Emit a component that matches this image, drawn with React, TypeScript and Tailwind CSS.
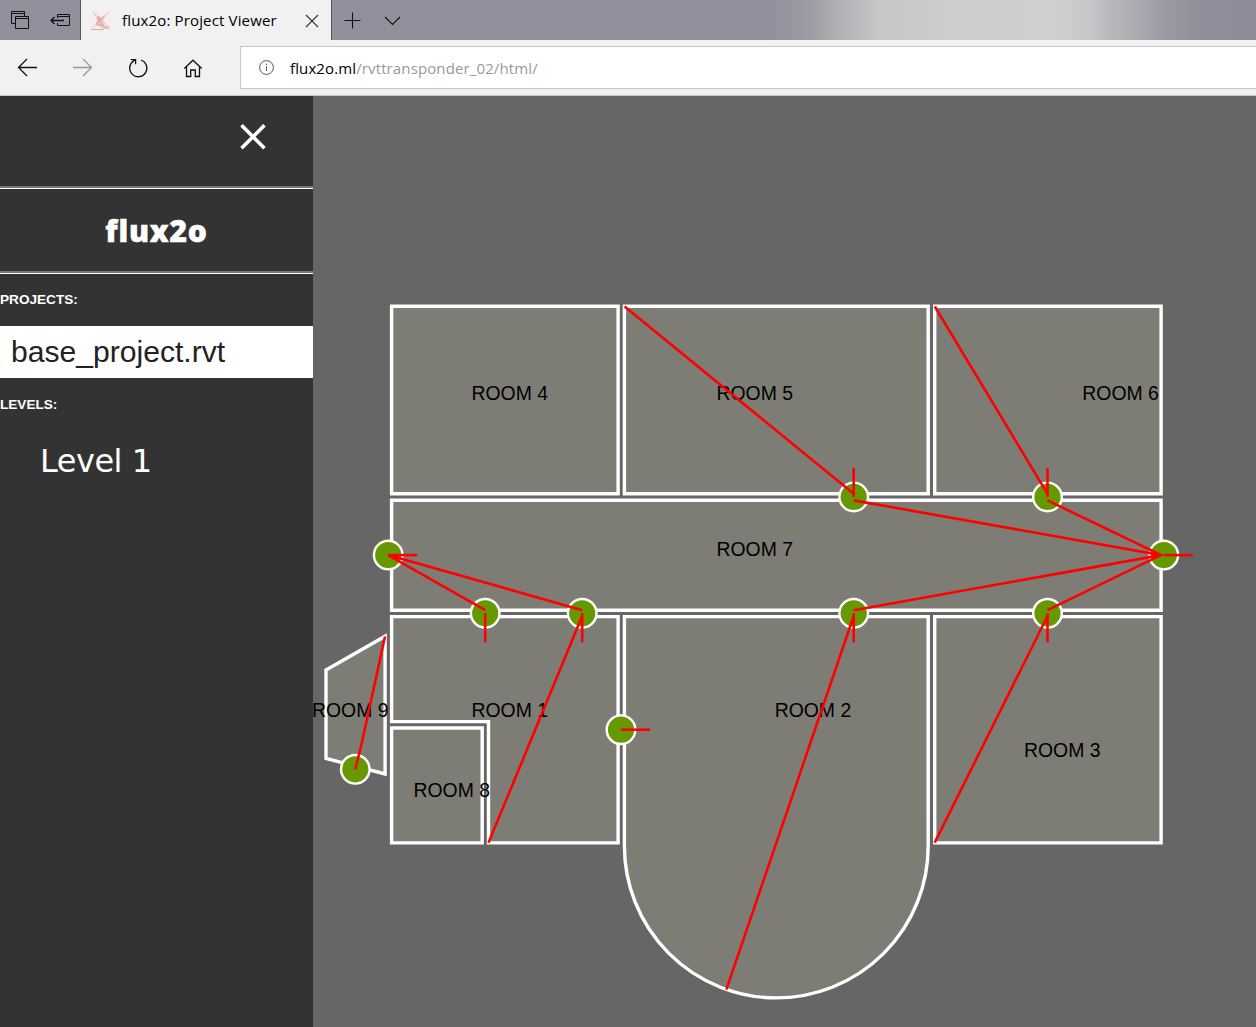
import React from 'react';

const rooms = [
  'M391.6 306.3H618.1V493.8H391.6Z',
  'M624.4 306.3H928.2V493.8H624.4Z',
  'M934.7 306.3H1161.1V493.8H934.7Z',
  'M391.6 500.3H1161.1V610.3H391.6Z',
  'M391.6 616.6H618.1V842.9H488.5V721.6H391.6Z',
  'M624.4 616.6H928.2V846A151.9 151.9 0 0 1 624.4 846Z',
  'M934.7 616.6H1161.1V842.9H934.7Z',
  'M391.6 728H482.2V842.9H391.6Z',
  'M326 670L385.1 636.2V774L326 758.4Z',
];

const labels: [string, number, number][] = [
  ['ROOM 4', 471.5, 400],
  ['ROOM 5', 716.5, 400],
  ['ROOM 6', 1082.3, 400],
  ['ROOM 7', 716.5, 556],
  ['ROOM 9', 312, 717],
  ['ROOM 1', 471.5, 717],
  ['ROOM 2', 774.7, 717],
  ['ROOM 3', 1024, 757],
  ['ROOM 8', 413.5, 797],
];

const doors: [number, number][] = [
  [388.2, 555.1], [485.2, 613.3], [582.2, 613.3], [853.7, 496.9], [1047.5, 496.9],
  [1163.8, 555.1], [853.7, 613.3], [1047.5, 613.3], [621, 729.7], [355.3, 769.3],
];

const paths = [
  'M388.2 555.1H417.3', 'M485.2 613.3V642.3', 'M582.2 613.3V642.3', 'M853.7 496.9V467.9',
  'M1047.5 496.9V467.9', 'M1163.8 555.1H1193', 'M853.7 613.3V642.3', 'M1047.5 613.3V642.3',
  'M621 729.7H650',
  'M388.2 555.1L485.2 610.2', 'M388.2 555.1L582.2 610.2',
  'M624.6 306.5L853.7 493.8', 'M934.8 306.5L1047.5 493.8',
  'M853.7 500.4L1161 555.1L853.7 610.2', 'M1047.5 500.4L1161 555.1L1047.5 610.2',
  'M582.2 616L488.5 842.7', 'M853.7 616L726.3 989.6', 'M1047.5 616L934.7 842.7',
  'M385 636.5L362 742L355.3 769.3',
];

function FloorPlan() {
  return (
    <svg width="943" height="931" viewBox="313 96 943 931" className="block overflow-visible">
      <g fill="#7e7d75" stroke="#fff" strokeWidth="3.4">
        {rooms.map((d) => <path key={d} d={d} />)}
      </g>
      <g fontSize="19.4" fill="#000" className="font-['Liberation_Sans',Arial,sans-serif]">
        {labels.map(([t, x, y]) => <text key={t} x={x} y={y}>{t}</text>)}
      </g>
      <g fill="#669900" stroke="#fff" strokeWidth="2.4">
        {doors.map(([x, y]) => <circle key={`${x}-${y}`} cx={x} cy={y} r="14.3" />)}
      </g>
      <g fill="none" stroke="#f00" strokeWidth="2.6">
        {paths.map((d) => <path key={d} d={d} />)}
      </g>
    </svg>
  );
}

function TitleBar() {
  return (
    <div className="flex h-10 bg-[linear-gradient(90deg,#91909d_0px,#91909d_770px,#9c9ca6_810px,#a9abad_828px,#b8b7bd_850px,#c5c6c6_878px,#cdcdcb_950px,#cfcfcf_1060px,#c6c6c8_1090px,#b9b7bd_1112px,#acadb1_1135px,#9d9da7_1160px,#8f8e9a_1200px,#8d8b97_1256px)]">
      <div className="w-20 shrink-0">
        <svg width="80" height="40" fill="none" stroke="#111" strokeWidth="1">
          <path d="M15 23.5H11.5V11.5H24.5V16M11.5 13.5H24.5M15.5 16.5H28.5V28.5H15.5ZM15.5 18.5H28.5" />
          <path d="M57.5 18V14.5H69.5V25.5H57.5V23M57.5 16.5H69.5" />
          <path d="M64 20.5H51M54.5 17L51 20.5L54.5 24" strokeWidth="1.3" />
        </svg>
      </div>
      <div className="flex w-[252px] shrink-0 items-center border-x border-[#55545c] bg-[#f1f1f1]">
        <svg className="ml-[10px] shrink-0" width="20" height="20" fill="none" stroke="#d98f8f" strokeWidth=".45">
          <rect width="20" height="20" fill="#f5eeec" stroke="none" />
          <path d="M6 6L13 8L12 14L17 17L18 19H13L5 14Z" fill="#eccfcc" stroke="none" />
          <path d="M1 1L19 18M19 1L5 14L18 19M3 4L13 15L6 15M5 14L14 6L6 9L17 19M7 6L9 15M1 18L8 12" />
          <path d="M0 19.5H13" stroke="#aaa" strokeWidth=".8" />
        </svg>
        <span className="ml-[11px] w-[172px] shrink-0 whitespace-nowrap font-['Open_Sans',sans-serif] text-[15px] tracking-[0.15px] text-black">flux2o: Project Viewer</span>
        <svg className="ml-[11px] mt-px shrink-0" width="14" height="14" fill="none" stroke="#333" strokeWidth="1.1"><path d="M1 1L13 13M13 1L1 13" /></svg>
      </div>
      <svg width="100" height="40" fill="none" stroke="#111" strokeWidth="1.1"><path d="M12.5 20.5H28.5M20.5 12.5V28.5M53 17L60.5 24.5L68 17" /></svg>
    </div>
  );
}

function AddressBar() {
  return (
    <div className="flex h-14 border-b border-[#c8c8c8] bg-[#f1f1f1] pt-[6px]">
      <svg className="-mt-[6px] shrink-0" width="240" height="55" fill="none" stroke="#111" strokeWidth="1.3">
        <path d="M37 27.5H19M27 19L18.5 27.5L27 36" />
        <path d="M73 27.5H91M83 19L91.5 27.5L83 36" stroke="#999" />
        <path d="M141 20A8.6 8.6 0 1 1 133.5 21L135.5 19.7M130.8 19.7H135.6V24.3" />
        <path d="M184.3 28.5L193 20.2L201.7 28.5M186.5 27V36.5H190.7V30H195.3V36.5H199.5V27" />
      </svg>
      <div className="flex h-[43px] flex-1 items-center border border-r-0 border-[#c8c8c8] bg-white">
        <svg className="ml-[18px]" width="15" height="15" fill="none" stroke="#555"><circle cx="7.5" cy="7.5" r="6.9" /><path d="M7.5 6.2V11M7.5 3.7V5" /></svg>
        <span className="ml-[16px] mt-px font-['Open_Sans',sans-serif] text-[15px] tracking-[0.12px] text-black">flux2o.ml<span className="text-[#999]">/rvttransponder_02/html/</span></span>
      </div>
    </div>
  );
}

function Rule() {
  return <div className="h-[3px] border-b border-white bg-[#777]" />;
}

function Sidebar() {
  return (
    <aside className="h-[931px] w-[313px] shrink-0 bg-[#333] font-['Liberation_Sans',Arial,sans-serif] text-white">
      <div className="flex h-[90px] justify-end pr-[47px] pt-[28px]">
        <svg width="26" height="26" stroke="#fff" strokeWidth="3.6"><path d="M1.5 1.2L24.5 24.2M24.5 1.2L1.5 24.2" /></svg>
      </div>
      <Rule />
      <h1 className="flex h-[82px] items-center justify-center font-['Open_Sans',sans-serif] text-[30px] font-extrabold tracking-[0.8px] [-webkit-text-stroke:0.5px_white]"><span>flux2o</span></h1>
      <Rule />
      <h2 className="h-[52px] pt-[18px] text-[13.6px] font-bold leading-4">PROJECTS:</h2>
      <div className="flex h-[52px] items-center bg-white pl-[11px] text-[30.1px] text-[#222]">base_project.rvt</div>
      <h2 className="pt-[19px] text-[13.6px] font-bold leading-4">LEVELS:</h2>
      <div className="pl-10 pt-[28px] font-['DejaVu_Sans',Verdana,sans-serif] text-[32px] leading-[40px] tracking-[-0.5px]">Level 1</div>
    </aside>
  );
}

export default function App() {
  return (
    <div className="h-[1027px] w-[1256px] overflow-hidden bg-[#666]">
      <TitleBar />
      <AddressBar />
      <main className="flex">
        <Sidebar />
        <FloorPlan />
      </main>
    </div>
  );
}
